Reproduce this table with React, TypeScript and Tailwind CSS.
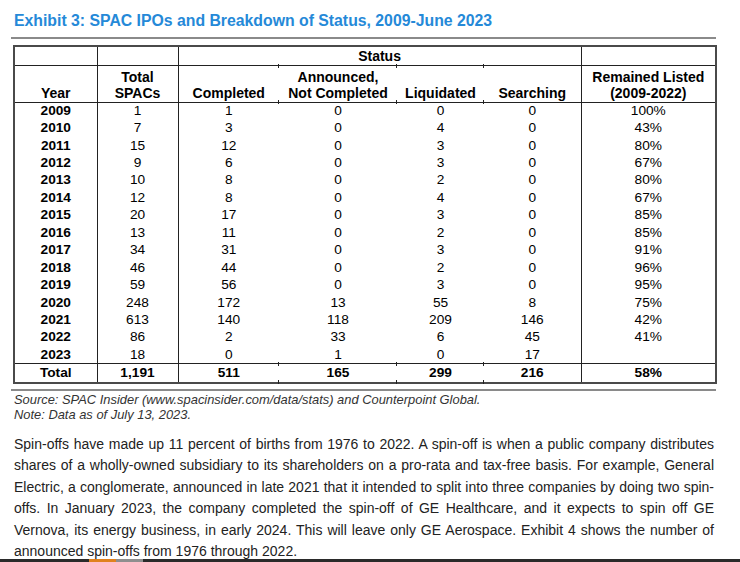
const rows: [string, string, string, string, string, string, string][] = [
  ['2009', '1', '1', '0', '0', '0', '100%'],
  ['2010', '7', '3', '0', '4', '0', '43%'],
  ['2011', '15', '12', '0', '3', '0', '80%'],
  ['2012', '9', '6', '0', '3', '0', '67%'],
  ['2013', '10', '8', '0', '2', '0', '80%'],
  ['2014', '12', '8', '0', '4', '0', '67%'],
  ['2015', '20', '17', '0', '3', '0', '85%'],
  ['2016', '13', '11', '0', '2', '0', '85%'],
  ['2017', '34', '31', '0', '3', '0', '91%'],
  ['2018', '46', '44', '0', '2', '0', '96%'],
  ['2019', '59', '56', '0', '3', '0', '95%'],
  ['2020', '248', '172', '13', '55', '8', '75%'],
  ['2021', '613', '140', '118', '209', '146', '42%'],
  ['2022', '86', '2', '33', '6', '45', '41%'],
  ['2023', '18', '0', '1', '0', '17', ''],
];

// small tick marks where the status sub-columns meet the horizontal rules
const Tick = ({ pos }: { pos: 'top' | 'bottom' }) => (
  <span
    className={`absolute left-[-1px] w-px h-[4px] bg-[#222] ${pos === 'top' ? 'top-[-2px]' : 'bottom-[-2px]'}`}
  />
);

const App = () => {
  const line = 'border-[#222]';

  return (
    <div className="relative w-[740px] h-[562px] overflow-hidden bg-white font-['Liberation_Sans',Arial,sans-serif] text-black">
      {/* Title */}
      <h2 className="ml-[14px] pt-[11px] text-[15.8px] leading-[20px] font-bold text-[#2589d8]">
        Exhibit 3: SPAC IPOs and Breakdown of Status, 2009-June 2023
      </h2>
      <div className="ml-[11px] mt-[6px] w-[705px] h-[2px] bg-[#8a8a8a]" />

      {/* Table */}
      <table className="ml-[13px] mt-[6px] w-[702px] table-fixed border-collapse border-2 border-[#4a4a4a] text-center">
        <colgroup>
          <col className="w-[83px]" />
          <col className="w-[81px]" />
          <col className="w-[101px]" />
          <col className="w-[118px]" />
          <col className="w-[87px]" />
          <col className="w-[97px]" />
          <col className="w-[135px]" />
        </colgroup>
        <thead className="text-[14px] leading-[16px] font-bold">
          <tr className="h-[19px]">
            <th className={`border-r border-b ${line}`} />
            <th className={`border-r border-b ${line}`} />
            <th colSpan={4} className={`border-r border-b ${line}`}>
              Status
            </th>
            <th className={`border-b ${line}`} />
          </tr>
          <tr className="h-[37px]">
            <th className={`border-r border-b ${line} align-bottom pb-px`}>Year</th>
            <th className={`border-r border-b ${line} align-bottom pb-px`}>
              Total
              <br />
              SPACs
            </th>
            <th className={`border-b ${line} align-bottom pb-px`}>Completed</th>
            <th className={`relative border-b ${line} align-bottom pb-px`}>
              <Tick pos="top" />
              <Tick pos="bottom" />
              Announced,
              <br />
              Not Completed
            </th>
            <th className={`relative border-b ${line} align-bottom pb-px`}>
              <Tick pos="top" />
              <Tick pos="bottom" />
              Liquidated
            </th>
            <th className={`relative border-r border-b ${line} align-bottom pb-px`}>
              <Tick pos="top" />
              <Tick pos="bottom" />
              Searching
            </th>
            <th className={`border-b ${line} align-bottom pb-px`}>
              Remained Listed
              <br />
              (2009-2022)
            </th>
          </tr>
        </thead>
        <tbody className="text-[13.7px] leading-[16px]">
          {rows.map((r) => (
            <tr key={r[0]} className="h-[17.44px]">
              <td className={`border-r ${line} font-bold`}>{r[0]}</td>
              <td className={`border-r ${line}`}>{r[1]}</td>
              <td>{r[2]}</td>
              <td>{r[3]}</td>
              <td>{r[4]}</td>
              <td className={`border-r ${line}`}>{r[5]}</td>
              <td>{r[6]}</td>
            </tr>
          ))}
          <tr className="h-[19px] font-bold">
            <td className={`border-r border-t ${line}`}>Total</td>
            <td className={`border-r border-t ${line}`}>1,191</td>
            <td className={`border-t ${line}`}>511</td>
            <td className={`relative border-t ${line}`}>
              <Tick pos="top" />
              <Tick pos="bottom" />
              165
            </td>
            <td className={`relative border-t ${line}`}>
              <Tick pos="top" />
              <Tick pos="bottom" />
              299
            </td>
            <td className={`relative border-r border-t ${line}`}>
              <Tick pos="top" />
              <Tick pos="bottom" />
              216
            </td>
            <td className={`border-t ${line}`}>58%</td>
          </tr>
        </tbody>
      </table>

      {/* Source */}
      <div className="ml-[11px] mt-[5px] w-[705px] h-[2px] bg-[#8a8a8a]" />
      <div className="ml-[14px] mt-px text-[12.9px] leading-[15.5px] italic text-[#333]">
        <p>Source: SPAC Insider (www.spacinsider.com/data/stats) and Counterpoint Global.</p>
        <p>Note: Data as of July 13, 2023.</p>
      </div>

      {/* Body text */}
      <p className="ml-[14px] mt-[11px] w-[700px] text-justify text-[14px] leading-[21.5px] text-[#222]">
        Spin-offs have made up 11 percent of births from 1976 to 2022. A spin-off is when a public company
        distributes shares of a wholly-owned subsidiary to its shareholders on a pro-rata and tax-free basis. For
        example, General Electric, a conglomerate, announced in late 2021 that it intended to split into three
        companies by doing two spin-offs. In January 2023, the company completed the spin-off of GE Healthcare, and
        it expects to spin off GE Vernova, its energy business, in early 2024. This will leave only GE Aerospace.
        Exhibit 4 shows the number of announced spin-offs from 1976 through 2022.
      </p>

      {/* Player progress strip along the bottom edge */}
      <div className="absolute bottom-0 left-0 flex w-full h-[3px] bg-[#2a2a2a]">
        <div className="w-[89px]" />
        <div className="w-[27px] bg-[#e0821e]" />
        <div className="w-[27px] bg-[#8f8f8f]" />
      </div>
    </div>
  );
};

export default App;
